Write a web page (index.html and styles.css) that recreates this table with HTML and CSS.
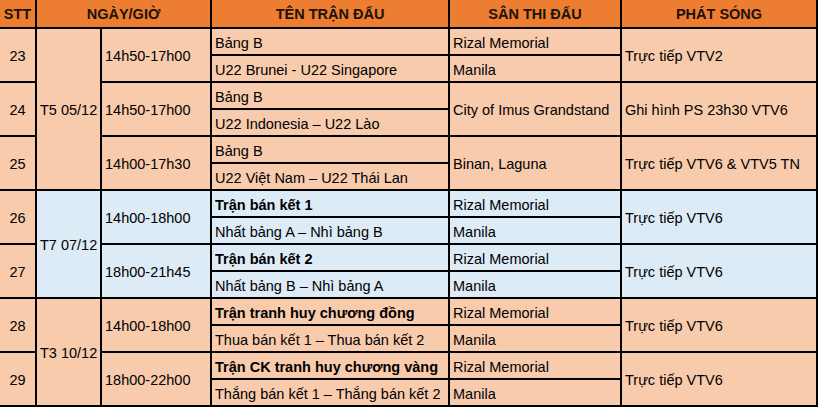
FILE: index.html
```html
<!DOCTYPE html>
<html lang="vi">
<head>
<meta charset="utf-8">
<title>Lịch thi đấu</title>
<link rel="stylesheet" href="styles.css">
</head>
<body>
<table class="schedule">
  <colgroup>
    <col class="c-stt"><col class="c-date"><col class="c-time"><col class="c-match"><col class="c-venue"><col class="c-tv">
  </colgroup>
  <thead>
    <tr class="head">
      <th>STT</th>
      <th colspan="2">NGÀY/GIỜ</th>
      <th>TÊN TRẬN ĐẤU</th>
      <th>SÂN THI ĐẤU</th>
      <th>PHÁT SÓNG</th>
    </tr>
  </thead>
  <tbody>
    <tr>
      <td rowspan="2" class="num">23</td>
      <td rowspan="6" class="date">T5 05/12</td>
      <td rowspan="2">14h50-17h00</td>
      <td>Bảng B</td>
      <td>Rizal Memorial</td>
      <td rowspan="2">Trực tiếp VTV2</td>
    </tr>
    <tr>
      <td>U22 Brunei - U22 Singapore</td>
      <td>Manila</td>
    </tr>
    <tr>
      <td rowspan="2" class="num">24</td>
      <td rowspan="2">14h50-17h00</td>
      <td>Bảng B</td>
      <td rowspan="2">City of Imus Grandstand</td>
      <td rowspan="2">Ghi hình PS 23h30 VTV6</td>
    </tr>
    <tr>
      <td>U22 Indonesia – U22 Lào</td>
    </tr>
    <tr>
      <td rowspan="2" class="num">25</td>
      <td rowspan="2">14h00-17h30</td>
      <td>Bảng B</td>
      <td rowspan="2">Binan, Laguna</td>
      <td rowspan="2">Trực tiếp VTV6 &amp; VTV5 TN</td>
    </tr>
    <tr>
      <td>U22 Việt Nam – U22 Thái Lan</td>
    </tr>
    <tr class="blue">
      <td rowspan="2" class="num">26</td>
      <td rowspan="4" class="date">T7 07/12</td>
      <td rowspan="2">14h00-18h00</td>
      <td class="strong">Trận bán kết 1</td>
      <td>Rizal Memorial</td>
      <td rowspan="2">Trực tiếp VTV6</td>
    </tr>
    <tr class="blue">
      <td>Nhất bảng A – Nhì bảng B</td>
      <td>Manila</td>
    </tr>
    <tr class="blue">
      <td rowspan="2" class="num">27</td>
      <td rowspan="2">18h00-21h45</td>
      <td class="strong">Trận bán kết 2</td>
      <td>Rizal Memorial</td>
      <td rowspan="2">Trực tiếp VTV6</td>
    </tr>
    <tr class="blue">
      <td>Nhất bảng B – Nhì bảng A</td>
      <td>Manila</td>
    </tr>
    <tr>
      <td rowspan="2" class="num">28</td>
      <td rowspan="4" class="date">T3 10/12</td>
      <td rowspan="2">14h00-18h00</td>
      <td class="strong">Trận tranh huy chương đồng</td>
      <td>Rizal Memorial</td>
      <td rowspan="2">Trực tiếp VTV6</td>
    </tr>
    <tr>
      <td>Thua bán kết 1 – Thua bán kết 2</td>
      <td>Manila</td>
    </tr>
    <tr>
      <td rowspan="2" class="num">29</td>
      <td rowspan="2">18h00-22h00</td>
      <td class="strong">Trận CK tranh huy chương vàng</td>
      <td>Rizal Memorial</td>
      <td rowspan="2">Trực tiếp VTV6</td>
    </tr>
    <tr>
      <td>Thắng bán kết 1 – Thắng bán kết 2</td>
      <td>Manila</td>
    </tr>
  </tbody>
</table>
</body>
</html>
```

FILE: styles.css
```css
html, body {
  margin: 0;
  padding: 0;
  background: #ffffff;
}

.schedule {
  border-collapse: collapse;
  table-layout: fixed;
  width: 817px;
  font-family: "Liberation Sans", Arial, sans-serif;
  font-size: 14.5px;
  color: #000;
}

.c-stt { width: 36px; }
.c-date { width: 65px; }
.c-time { width: 110px; }
.c-match { width: 238px; }
.c-venue { width: 172px; }
.c-tv { width: 196px; }

.schedule th,
.schedule td {
  border: 2px solid #000;
  padding: 2px 3px 0 3px;
  white-space: nowrap;
  overflow: hidden;
  vertical-align: middle;
  text-align: left;
  background: #f8cbad;
}

.schedule tr > :first-child { border-left: none; }
.schedule thead th { border-top: none; }

.schedule tr { height: 27px; }

.schedule .head { height: 28px; }

.schedule th {
  background: #ed7d31;
  color: #1b1208;
  font-weight: bold;
  text-align: center;
  padding: 0;
}

.schedule .num { text-align: center; padding: 2px 0 0 0; }

.schedule .blue td { background: #ddebf7; }
.schedule .blue td.num { background: #f8cbad; }

.schedule .strong { font-weight: bold; }
```
